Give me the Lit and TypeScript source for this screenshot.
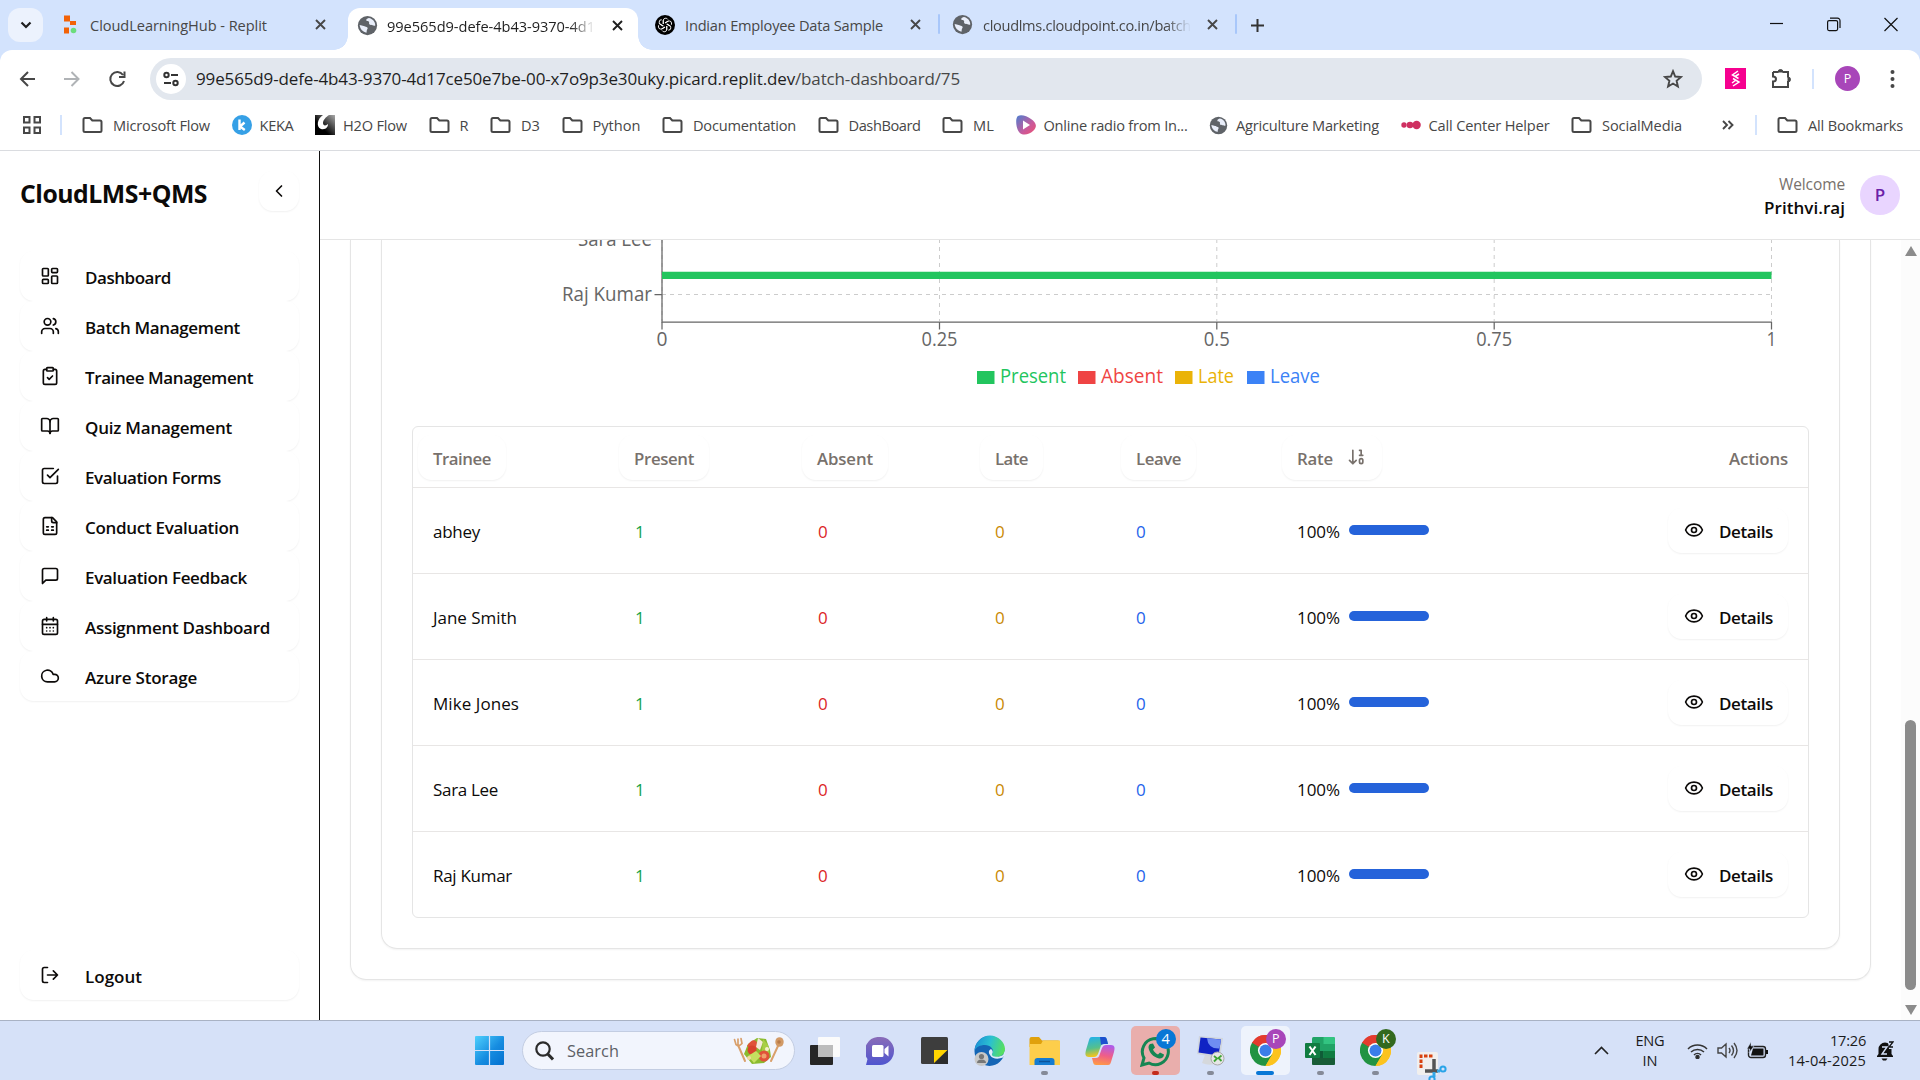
import { LitElement, html, css, svg } from "lit";
import { customElement, property } from "lit/decorators.js";

const lucide: Record<string, unknown> = {
  dashboard: svg`<rect width="7" height="9" x="3" y="3" rx="1"/><rect width="7" height="5" x="14" y="3" rx="1"/><rect width="7" height="9" x="14" y="12" rx="1"/><rect width="7" height="5" x="3" y="16" rx="1"/>`,
  users: svg`<path d="M16 21v-2a4 4 0 0 0-4-4H6a4 4 0 0 0-4 4v2"/><circle cx="9" cy="7" r="4"/><path d="M22 21v-2a4 4 0 0 0-3-3.87"/><path d="M16 3.13a4 4 0 0 1 0 7.75"/>`,
  clipboard: svg`<rect width="8" height="4" x="8" y="2" rx="1"/><path d="M16 4h2a2 2 0 0 1 2 2v14a2 2 0 0 1-2 2H6a2 2 0 0 1-2-2V6a2 2 0 0 1 2-2h2"/><path d="m9 14 2 2 4-4"/>`,
  book: svg`<path d="M12 7v14"/><path d="M3 18a1 1 0 0 1-1-1V4a1 1 0 0 1 1-1h5a4 4 0 0 1 4 4 4 4 0 0 1 4-4h5a1 1 0 0 1 1 1v13a1 1 0 0 1-1 1h-6a3 3 0 0 0-3 3 3 3 0 0 0-3-3z"/>`,
  check: svg`<path d="m9 11 3 3L22 4"/><path d="M21 12v7a2 2 0 0 1-2 2H5a2 2 0 0 1-2-2V5a2 2 0 0 1 2-2h11"/>`,
  file: svg`<path d="M15 2H6a2 2 0 0 0-2 2v16a2 2 0 0 0 2 2h12a2 2 0 0 0 2-2V7Z"/><path d="M14 2v4a2 2 0 0 0 2 2h4"/><path d="M8 13h2M14 13h2M8 17h2M14 17h2"/>`,
  message: svg`<path d="M21 15a2 2 0 0 1-2 2H7l-4 4V5a2 2 0 0 1 2-2h14a2 2 0 0 1 2 2z"/>`,
  calendar: svg`<path d="M8 2v4M16 2v4"/><rect width="18" height="18" x="3" y="4" rx="2"/><path d="M3 10h18M8 14h.01M12 14h.01M16 14h.01M8 18h.01M12 18h.01M16 18h.01"/>`,
  cloud: svg`<path d="M17.5 19H9a7 7 0 1 1 6.71-9h1.79a4.5 4.5 0 1 1 0 9Z"/>`,
  logout: svg`<path d="M9 21H5a2 2 0 0 1-2-2V5a2 2 0 0 1 2-2h4"/><path d="m16 17 5-5-5-5M21 12H9"/>`,
  left: svg`<path d="m15 18-6-6 6-6"/>`,
  eye: svg`<path d="M2.06 12.35a1 1 0 0 1 0-.7 10.75 10.75 0 0 1 19.88 0 1 1 0 0 1 0 .7 10.75 10.75 0 0 1-19.88 0"/><circle cx="12" cy="12" r="3"/>`,
  sort: svg`<path d="m3 16 4 4 4-4M7 20V4M17 10V4h-2M15 10h4"/><rect x="15" y="14" width="4" height="6" ry="2"/>`,
};
const line = (name: string, size = 20) =>
  html`<svg width=${size} height=${size} viewBox="0 0 24 24" fill="none" stroke="currentColor" stroke-width="2" stroke-linecap="round" stroke-linejoin="round">${lucide[name]}</svg>`;

/** A run of text tracked so that it fills the given advance width. */
@customElement("ui-text")
class UiText extends LitElement {
  static styles = css`
    :host { display: inline-block; white-space: pre; flex: none; }
  `;
  @property({ type: Number }) w = 0;
  @property() text = "";
  render() { return html`<span>${this.text}</span>`; }
  updated() {
    const el = this.renderRoot.querySelector("span")!;
    el.style.letterSpacing = "0";
    const natural = el.getBoundingClientRect().width;
    if (this.w && this.text.length) {
      el.style.letterSpacing = `${(this.w - natural) / this.text.length}px`;
      this.style.width = `${this.w}px`;
    }
  }
}
const t = (text: string, w: number, cls = "") => html`<ui-text class=${cls} .text=${text} .w=${w}></ui-text>`;

const globe = (s = 22) => html`<svg width=${s} height=${s} viewBox="0 0 24 24"><circle cx="12" cy="12" r="11" fill="#5f6368"/><path d="M3 11.5c2 .2 3.200 1 4.600 1.100 1.400 0 2 .900 3.400 1.200 1.400.4 1.500 1.800.6 2.800-.6.8-.4 2.200-.8 3.600-3.800-.6-7.200-3.800-7.800-8.700zM13.500 3.300c-2 .8-3.400 1.600-2.800 3 .5 1.200 2.200.4 3 1.500.6 1-.4 1.800.4 2.800 1 1.200 2.600.4 3.800 1.200 1 .7 2 .7 3 .2 0-4.500-3-7.900-7.400-8.700z" fill="#e9eefa"/></svg>`;
const folder = html`<svg width="21" height="18" viewBox="0 0 21 18" fill="none" stroke="#474747" stroke-width="2"><path d="M3 2h5l2.300 2.500H18a1.500 1.500 0 0 1 1.500 1.500v8.500A1.500 1.500 0 0 1 18 16H3a1.500 1.500 0 0 1-1.500-1.500v-11A1.500 1.500 0 0 1 3 2z"/></svg>`;
const cross = (c = "#474747") => html`<svg class="cross" width="11" height="11" viewBox="0 0 11 11" stroke=${c} stroke-width="1.900"><path d="M1 1l9 9M10 1l-9 9"/></svg>`;

const keka = html`<svg width="20" height="20" viewBox="0 0 20 20"><circle cx="10" cy="10" r="10" fill="#36a0e6"/><path d="M7.500 4.500v10.500M12.500 7.500l-4.500 4 4.800 3.500" fill="none" stroke="#fff" stroke-width="2.400"/></svg>`;
const h2o = html`<svg width="20" height="20" viewBox="0 0 20 20"><defs><linearGradient id="h" x1="0" x2="1" y1="1" y2="0"><stop offset=".35" stop-color="#000"/><stop offset="1" stop-color="#aaa"/></linearGradient></defs><rect width="20" height="20" fill="url(#h)"/><path d="M8 0C2 4 1 12 6 14c5 1 7-2 7-5-2 2-5 2-5-1S11 2 14 0z" fill="#fff"/></svg>`;
const radio = html`<svg width="20" height="20" viewBox="0 0 20 20"><defs><linearGradient id="r" x1="0" x2="1" y1="0" y2="1"><stop offset="0" stop-color="#4b7fd0"/><stop offset=".6" stop-color="#c85a9c"/><stop offset="1" stop-color="#f0506e"/></linearGradient></defs><path d="M2 1c3-2 9 0 13 3 5 3 7 8 2 12-4 4-11 5-14 1C0 13-1 3 2 1z" fill="url(#r)"/><path d="M7 5.500v9l7-4.500z" fill="#fff"/></svg>`;
const dots = html`<svg width="20" height="20" viewBox="0 0 20 20" fill="#cf3061"><circle cx="3" cy="10" r="2.700"/><circle cx="9" cy="10" r="3.300"/><circle cx="15.600" cy="10" r="4.200"/></svg>`;

const bookmarks: [unknown, string, number, boolean][] = [
  [folder, "Microsoft Flow", 97, true], [keka, "KEKA", 34, false], [h2o, "H2O Flow", 64, false],
  [folder, "R", 9, true], [folder, "D3", 19, true], [folder, "Python", 48, true],
  [folder, "Documentation", 103, true], [folder, "DashBoard", 72, true], [folder, "ML", 21, true],
  [radio, "Online radio from In...", 144, false], [globe(19), "Agriculture Marketing", 143, false],
  [dots, "Call Center Helper", 121, false], [folder, "SocialMedia", 80, true],
];

const nav: [string, string, number][] = [
  ["dashboard", "Dashboard", 86], ["users", "Batch Management", 155], ["clipboard", "Trainee Management", 168],
  ["book", "Quiz Management", 147], ["check", "Evaluation Forms", 136], ["file", "Conduct Evaluation", 154],
  ["message", "Evaluation Feedback", 162], ["calendar", "Assignment Dashboard", 185], ["cloud", "Azure Storage", 112],
];

const rows: [string, number][] = [["abhey", 47], ["Jane Smith", 84], ["Mike Jones", 86], ["Sara Lee", 65], ["Raj Kumar", 79]];

const chrome = html`<svg width="31" height="31" viewBox="0 0 32 32"><path d="M16 16L2.140 8A16 16 0 0 1 29.860 8z" fill="#e33b2e"/><path d="M16 16L29.860 8A16 16 0 0 1 16 32z" fill="#fcc31e"/><path d="M16 16v16A16 16 0 0 1 2.140 8z" fill="#229342"/><path d="M16 8h13.860L23 20z" fill="#fcc31e"/><path d="M9 20L2.140 8 16 8z" fill="#229342"/><path d="M2.140 8A16 16 0 0 1 29.860 8H16l-7 4z" fill="#e33b2e"/><path d="M16 32l7-12-7 2-7-2-4-6z" fill="#229342"/><path d="M23 20l-7 12A16 16 0 0 0 29.860 8H20z" fill="#fcc31e"/><circle cx="16" cy="16" r="7.800" fill="#fff"/><circle cx="16" cy="16" r="6.200" fill="#3b7de9"/></svg>`;

@customElement("app-root")
class AppRoot extends LitElement {
  static styles = css`
    :host { display: block; width: 1920px; height: 1080px; overflow: hidden; background: #fff; color: #0c0a09; font-family: "Open Sans", "Noto Sans", "Liberation Sans", sans-serif; font-size: 17px; line-height: 24px; }
    * { box-sizing: border-box; }
    svg { display: block; flex: none; }
    .row { display: flex; align-items: center; }
    .screen { display: flex; flex-direction: column; height: 1080px; }

    .strip { display: flex; height: 50px; background: #d3e3fd; font-size: 14.600px; color: #474747; }
    .search-tabs { width: 35px; height: 34px; margin: 8px 0 0 8px; border-radius: 12px; background: #ecf2fd; display: grid; place-items: center; }
    .tab { display: flex; align-items: center; height: 33px; margin-top: 8px; }
    .tab ui-text { padding-top: 1px; }
    .tab .cross { margin-left: auto; }
    .t1 { width: 263px; margin-left: 20px; }
    .t1 .ic { width: 27px; }
    .active { width: 290px; height: 42px; margin: 8px 0 0 22px; padding: 0 15px 8px 9px; background: #fff; border-radius: 12px 12px 0 0; position: relative; color: #1f1f1f; }
    .active::before, .active::after { content: ""; position: absolute; bottom: 0; width: 14px; height: 14px; }
    .active::before { left: -14px; background: radial-gradient(circle at 0 0, transparent 13.500px, #fff 14px); }
    .active::after { right: -14px; background: radial-gradient(circle at 100% 0, transparent 13.500px, #fff 14px); }
    .ic { width: 30px; flex: none; }
    .fade { width: 208px; overflow: hidden; white-space: nowrap; -webkit-mask-image: linear-gradient(90deg, #000 88%, transparent 100%); mask-image: linear-gradient(90deg, #000 88%, transparent 100%); }
    .t3 { width: 266px; margin-left: 17px; }
    .t4 { width: 266px; margin-left: 12px; }
    .t4 .ic { width: 31px; }
    .sep { width: 2px; height: 20px; background: #a8c7fa; margin-top: 14px; flex: none; border-radius: 1px; }
    .t3 + .sep { margin-left: 17px; }
    .t4 + .sep { margin-left: 17px; }
    .plus { margin: 19px 0 0 14px; }
    .win { margin: 17px 22px 0 auto; display: flex; gap: 43px; }

    .corner { background: #d3e3fd; }
    .toolbar { display: flex; align-items: center; height: 57px; background: #fff; border-radius: 12px 12px 0 0; padding: 0 20px 0 18px; }
    .tools { display: flex; gap: 26px; width: 132px; }
    .omni { display: flex; align-items: center; width: 1552px; height: 42px; border-radius: 21px; background: #e2e7ee; padding: 0 19px 0 6px; color: #1f1f1f; }
    .omni > ui-text { padding-top: 1px; }
    .site { width: 30px; height: 30px; border-radius: 50%; background: #fff; display: grid; place-items: center; margin-right: 10px; }
    .path { color: #474747; }
    .star { margin-left: auto; }
    .pink { margin-left: 23px; }
    .puzzle { margin-left: 25px; }
    .vsep { width: 2px; height: 20px; background: #d3e3fd; flex: none; }
    .toolbar .vsep { margin-left: 20px; }
    .who { width: 25px; height: 25px; border-radius: 50%; background: #a846b9; color: #fff; font-size: 12.500px; display: grid; place-items: center; margin-left: 21px; }
    .more { margin-left: 30px; }

    .marks { display: flex; align-items: center; height: 44px; border-bottom: 1px solid #dadce0; font-size: 14.600px; color: #474747; padding: 0 17px 7px 23px; }
    .marks .vsep { margin: 0 20px 0 19px; }
    .list { display: flex; gap: 21.500px; align-items: center; }
    .mark { display: flex; align-items: center; gap: 8px; }
    .mark.f { gap: 10px; }
    .chev { margin-left: auto; margin-right: 2px; }
    .all { width: 126px; }

    .page { display: flex; height: 869px; }
    .side { width: 320px; border-right: 1px solid #111; padding: 20px 20px 20px; display: flex; flex-direction: column; }
    .brand { display: flex; justify-content: space-between; height: 80px; }
    .brand ui-text { font-weight: 700; font-size: 24.800px; line-height: 44px; }
    .btn { border-radius: 14px; background: #fff; box-shadow: 0 1px 2px rgba(0, 0, 0, .06); display: flex; align-items: center; font-weight: 600; }
    .back { width: 40px; height: 40px; justify-content: center; }
    .nav .btn, .side > .btn { height: 50px; padding-left: 20px; gap: 25px; font-size: 17px; }
    .nav ui-text, .out ui-text { padding-top: 3px; }
    .out { margin-top: auto; }
    .main { flex: 1; display: flex; flex-direction: column; }
    .head { height: 89px; border-bottom: 1px solid #e5e5e5; display: flex; justify-content: flex-end; align-items: center; gap: 15px; padding: 0 20px 0 0; }
    .hello { display: flex; flex-direction: column; align-items: flex-end; padding-top: 2px; }
    .hello .w { color: #78716c; font-size: 15.500px; }
    .hello .n { font-weight: 600; }
    .avatar { width: 40px; height: 40px; border-radius: 50%; background: #e9d5ff; color: #6b21a8; font-weight: 600; display: grid; place-items: center; }
    .scroll { display: flex; height: 780px; }
    .view { width: 1581px; padding-left: 30px; }
    .outer { width: 1521px; height: 740px; border: 1px solid #e5e5e5; border-top: 0; border-radius: 0 0 16px 16px; box-shadow: 0 1px 2px rgba(0, 0, 0, .05); padding: 0 30px 30px; }
    .inner { width: 1459px; height: 709px; border: 1px solid #e5e5e5; border-top: 0; border-radius: 0 0 16px 16px; box-shadow: 0 1px 2px rgba(0, 0, 0, .05); padding: 0 30px; }
    .chart { height: 186px; }
    .chart text { font-size: 19.200px; fill: #666; }
    .table { width: 1397px; height: 492px; border: 1px solid #e5e5e5; border-radius: 6px; }
    .tr { display: grid; grid-template-columns: 202px 183px 177px 141px 161px 1fr 200px; height: 86px; align-items: center; border-top: 1px solid #e8e6e5; }
    .tr > * { margin-left: 20px; }
    .tr > :last-child { justify-self: end; margin-right: 20px; }
    .tr ui-text { position: relative; top: 1px; }
    .th { height: 60px; border: 0; color: #78716c; font-weight: 600; font-size: 16.800px; }
    .th ui-text { top: 2px; }
    .th .btn { justify-self: start; margin-left: 5px; padding: 0 15px; height: 45px; gap: 14px; color: #78716c; }
    .th .btn:nth-child(2), .th .btn:nth-child(3) { margin-left: 4px; }
    .g { color: #16a34a; } .r { color: #dc2626; } .y { color: #ca8a04; } .b { color: #2563eb; }
    .rate { gap: 9px; }
    .bar { width: 80px; height: 10px; border-radius: 5px; background: #2563da; margin-top: -2px; }
    .det { width: 120px; height: 45px; padding-left: 16px; gap: 15px; }
    .det svg { margin-top: -2px; }
    .sb { width: 19px; background: #fcfcfc; display: flex; flex-direction: column; align-items: center; padding: 6px 0 5px; }
    .thumb { width: 11px; height: 270px; border-radius: 6px; background: #8b8b8b; margin: 464px 0 auto; }

    .bar-os { display: flex; height: 60px; border-top: 1px solid #a9b2c4; background: #d6e1f8; align-items: center; color: #1b1b1b; }
    .start { margin-left: 475px; }
    .find { width: 273px; height: 39px; margin: 0 2px 0 18px; border-radius: 20px; background: #f2f5fd; border: 1px solid #c3cde2; display: flex; align-items: center; padding: 0 10px 0 12px; color: #5c5f66; font-size: 16.300px; }
    .find ui-text { margin-left: 13px; }
    .find svg:last-child { margin-left: auto; }
    .app { width: 55.100px; height: 59px; display: grid; place-items: center; position: relative; }
    .app.on::before { content: ""; position: absolute; left: 3px; top: 5px; width: 49px; height: 49px; border-radius: 5px; background: #eef3fc; }
    .app.alert::before { background: #e9aeac; }
    .app > svg { position: relative; }
    .pip { position: absolute; bottom: 5px; width: 7px; height: 4px; border-radius: 2px; background: #858a98; }
    .on .pip { width: 18px; background: #0877d6; }
    .alert .pip { width: 7px; background: #c42b1c; }
    .badge { position: absolute; left: 28px; top: 8px; width: 20px; height: 20px; border-radius: 50%; color: #fff; font-size: 12.500px; line-height: 20px; text-align: center; background: #0877d6; }
    .alert .badge { font-size: 14.500px; }
    .badge.p { background: #a846b9; } .badge.k { background: #33691e; }
    .tray { margin-left: auto; display: flex; align-items: center; padding-right: 26px; font-size: 14.600px; line-height: 20px; }
    .tray ui-text { position: relative; top: -1px; }
    .lang { width: 40px; margin-left: 21px; text-align: center; display: flex; flex-direction: column; align-items: center; }
    .status { display: flex; gap: 9px; margin-left: 17px; align-items: center; }
    .clock { display: flex; flex-direction: column; align-items: flex-end; margin: 0 10px 0 19px; }
  `;

  private tabs() {
    return html`<div class="strip">
      <div class="search-tabs"><svg width="12" height="8" viewBox="0 0 12 8" fill="none" stroke="#1f1f1f" stroke-width="2.200"><path d="M1.500 1.500L6 6l4.500-4.500"/></svg></div>
      <div class="tab t1"><div class="ic"><svg width="14" height="19" viewBox="0 0 14 19"><path d="M1 .5h6v6H1zM7 6h6v4H7z" fill="#f26207"/><path d="M1 12.500h5v6H1z" fill="#f26207"/><circle cx="10.500" cy="15.500" r="2.800" fill="#6bdd7c"/></svg></div>${t("CloudLearningHub - Replit", 177)}${cross()}</div>
      <div class="tab active"><div class="ic">${globe(21)}</div><div class="fade">${t("99e565d9-defe-4b43-9370-4d1", 208)}</div>${cross("#1f1f1f")}</div>
      <div class="tab t3"><div class="ic"><svg width="20" height="20" viewBox="0 0 20 20" fill="none"><circle cx="10" cy="10" r="10" fill="#000"/><g stroke="#fff" stroke-width=".9">${[0, 60, 120, 180, 240, 300].map((a) => svg`<path transform="rotate(${a} 10 10)" d="M8.200 9V5.600a2.500 2.500 0 0 1 4.700-1.100M10 8l3.500-2"/>`)}</g></svg></div>${t("Indian Employee Data Sample", 198)}${cross()}</div>
      <div class="sep"></div>
      <div class="tab t4"><div class="ic">${globe(21)}</div><div class="fade">${t("cloudlms.cloudpoint.co.in/batch", 208)}</div>${cross()}</div>
      <div class="sep"></div>
      <svg class="plus" width="13" height="13" viewBox="0 0 13 13" stroke="#333" stroke-width="2"><path d="M6.500 0v13M0 6.500h13"/></svg>
      <div class="win">
        <svg width="14" height="15" viewBox="0 0 14 15" stroke="#111" stroke-width="1.200"><path d="M0 6.500h13"/></svg>
        <svg width="14" height="15" viewBox="0 0 14 15" fill="none" stroke="#111" stroke-width="1.200"><rect x=".6" y="3.600" width="10" height="10" rx="1.500"/><path d="M3 1.200h7.500a2.500 2.500 0 0 1 2.500 2.500V11"/></svg>
        <svg width="14" height="15" viewBox="0 0 14 15" stroke="#111" stroke-width="1.200"><path d="M.5 1l13 13M13.500 1l-13 13"/></svg>
      </div>
    </div>`;
  }

  private toolbar() {
    return html`<div class="corner"><div class="toolbar">
      <div class="tools">
        <svg width="19" height="20" viewBox="0 0 19 20" fill="none" stroke="#474747" stroke-width="2"><path d="M17 10H3M10 3l-7 7 7 7"/></svg>
        <svg width="19" height="20" viewBox="0 0 19 20" fill="none" stroke="#b0b3b6" stroke-width="2"><path d="M1 10h14M8.500 3l7 7-7 7"/></svg>
        <svg width="19" height="20" viewBox="0 0 19 20" fill="none" stroke="#474747" stroke-width="2"><path d="M15 6a7 7 0 1 0 1 6M16.500 2.500v5.500H11"/></svg>
      </div>
      <div class="omni"><div class="site"><svg width="16" height="16" viewBox="0 0 16 16" fill="none" stroke="#333" stroke-width="2"><circle cx="3.500" cy="4" r="2.200"/><path d="M8 4h7M1 12h7"/><circle cx="12.500" cy="12" r="2.200"/></svg></div>${t("99e565d9-defe-4b43-9370-4d17ce50e7be-00-x7o9p3e30uky.picard.replit.dev", 599)}${t("/batch-dashboard/75", 165, "path")}
        <svg class="star" width="20" height="20" viewBox="0 0 20 20" fill="none" stroke="#474747" stroke-width="1.900"><path d="M10 2.200l2.200 5.300 5.800.5-4.400 3.800 1.300 5.700L10 14.500 5.100 17.500l1.300-5.700L2 8l5.800-.5z"/></svg></div>
      <svg class="pink" width="21" height="21" viewBox="0 0 21 21"><rect width="21" height="21" fill="#f6008f"/><path d="M13 3L7.500 7l6 3.500M14 6l-4 2.500M8 10.500l6 3.500-6 4M11 12l-4 3" fill="none" stroke="#fff" stroke-width="1.500"/></svg>
      <svg class="puzzle" width="21" height="21" viewBox="0 0 21 21" fill="none" stroke="#474747" stroke-width="2"><path d="M2 4h5.500M11.500 4H17v5.500M17 13v6H2v-5.500c4 0 4-5 0-5V4"/><path d="M7 4a2.300 2.300 0 0 1 5 0zM17 9a2.300 2.300 0 0 1 0 5z" fill="#474747" stroke-width="1"/></svg>
      <div class="vsep"></div><div class="who">P</div>
      <svg class="more" width="5" height="20" viewBox="0 0 5 20" fill="#474747"><circle cx="2.500" cy="3" r="2"/><circle cx="2.500" cy="10" r="2"/><circle cx="2.500" cy="17" r="2"/></svg>
    </div></div>
    <div class="marks">
      <svg width="18" height="18" viewBox="0 0 18 18" fill="none" stroke="#474747" stroke-width="2"><path d="M1 1h5.500v5.500H1zM11.500 1H17v5.500h-5.500zM1 11.500h5.500V17H1zM11.500 11.500H17V17h-5.500z"/></svg>
      <div class="vsep"></div>
      <div class="list">${bookmarks.map(([i, l, w, f]) => html`<div class="mark ${f ? "f" : ""}">${i}${t(l, w)}</div>`)}</div>
      <svg class="chev" width="12" height="10" viewBox="0 0 12 10" fill="none" stroke="#474747" stroke-width="1.900"><path d="M1 1l4 4-4 4M6.500 1l4 4-4 4"/></svg>
      <div class="vsep"></div><div class="mark f all">${folder}${t("All Bookmarks", 95)}</div>
    </div>`;
  }

  private chart() {
    const ticks: [number, string, number][] = [[250, "0", 11], [527.500, "0.25", 36], [804.800, "0.5", 26], [1082.200, "0.75", 36], [1359.500, "1", 10]];
    const legend: [number, string, string, number][] = [[565, "Present", "#22c55e", 66], [666, "Absent", "#ef4444", 62], [763, "Late", "#eab308", 36], [835, "Leave", "#3b82f6", 50]];
    return html`<svg class="chart" width="1397" height="186" viewBox="0 0 1397 186">
      <g stroke="#ccc" stroke-dasharray="4 4">${ticks.map(([x]) => svg`<path d="M${x} -1V81"/>`)}<path d="M250 54.500H1359"/></g>
      <g stroke="#666" stroke-width="1.250">${ticks.map(([x]) => svg`<path d="M${x} 82v7.500"/>`)}<path d="M250 0V82M249.500 82H1360M242.500 54.500h7.500"/></g>
      <path d="M250 31.800h1109.500v7.100H250z" fill="#22c55e"/>
      <text x="240" y="6" text-anchor="end" textLength="74" lengthAdjust="spacingAndGlyphs">Sara Lee</text>
      <text x="240" y="61" text-anchor="end" textLength="90" lengthAdjust="spacingAndGlyphs">Raj Kumar</text>
      ${ticks.map(([x, l, w]) => svg`<text x=${x} y="106" text-anchor="middle" textLength=${w} lengthAdjust="spacingAndGlyphs">${l}</text>`)}
      ${legend.map(([x, l, c, w]) => svg`<rect x=${x} y="131" width="17.500" height="13" fill=${c}/><text x=${x + 23} y="143" style="fill:${c}" textLength=${w} lengthAdjust="spacingAndGlyphs">${l}</text>`)}
    </svg>`;
  }

  private table() {
    const h: [string, number][] = [["Trainee", 58], ["Present", 60], ["Absent", 56], ["Late", 33], ["Leave", 45]];
    return html`<div class="table">
      <div class="tr th">${h.map(([l, w]) => html`<div class="btn">${t(l, w)}</div>`)}<div class="btn">${t("Rate", 36)}${line("sort")}</div>${t("Actions", 59)}</div>
      ${rows.map(([n, w]) => html`<div class="tr">${t(n, w)}${t("1", 9, "g")}${t("0", 10, "r")}${t("0", 10, "y")}${t("0", 10, "b")}
        <div class="row rate">${t("100%", 43)}<div class="bar"></div></div><div class="btn det">${line("eye")}${t("Details", 54)}</div></div>`)}
    </div>`;
  }

  private taskbar() {
    const app = (icon: unknown, cls = "", badge: unknown = "", pip = false) =>
      html`<div class="app ${cls}">${icon}${badge}${pip ? html`<div class="pip"></div>` : ""}</div>`;
    return html`<div class="bar-os">
      <svg class="start" width="29" height="29" viewBox="0 0 29 29"><defs><linearGradient id="w" x1="0" y1="0" x2="1" y2="1" ><stop offset="0" stop-color="#4fd0fd"/><stop offset=".55" stop-color="#168ce0"/><stop offset="1" stop-color="#0470cf"/></linearGradient></defs><rect width="29" height="29" rx="1" fill="url(#w)"/><path d="M14.500 0v29M0 14.500h29" stroke="#d6e1f8" stroke-width="1.200"/></svg>
      <div class="find"><svg width="19" height="20" viewBox="0 0 19 20" fill="none" stroke="#2b2b2b" stroke-width="2.200"><circle cx="8" cy="8" r="6.700"/><path d="M12.800 13L18 18.500" stroke-width="3"/></svg>${t("Search", 52)}
        <svg width="51" height="28" viewBox="0 0 51 28"><g stroke="#d9a06c" stroke-linecap="round" fill="none"><path d="M5 8l7 16" stroke-width="2"/><path d="M1.500 2.500l1.500 5q3 2.500 6-1L8 1.500M5 2v5" stroke-width="1.700"/><path d="M45 9l-7 15" stroke-width="2"/></g><ellipse cx="46.500" cy="5" rx="4.200" ry="4.800" fill="#d29a66"/><circle cx="46" cy="5" r="1.800" fill="#b97b49"/><path d="M11 17l4-10 9-6 9 1 4 11 1 7-7 6-12 1z" fill="#8bbb2f"/><path d="M14 9q5-8 9-5l3 6-6 4z" fill="#e05239"/><path d="M25 1l5 4-3 8-4-3z" fill="#f4ead8"/><path d="M30 2l5 6 1 8-7-2z" fill="#a8cf45"/><circle cx="19" cy="13" r="4.500" fill="#d8432c"/><circle cx="31" cy="19" r="5.500" fill="#e05239"/><circle cx="31" cy="19" r="2.500" fill="#f0a06c"/><path d="M15 19l8-5 5 5-7 7z" fill="#c5e060"/><circle cx="16" cy="21" r="2" fill="#f2d9a1"/><circle cx="34" cy="12" r="2" fill="#f6f0cb"/></svg></div>
      ${app(html`<svg width="30" height="28" viewBox="0 0 30 28"><rect y="8" width="23" height="20" rx="1" fill="#262626"/><rect x="8" width="22" height="20" rx="1" fill="#fbfbfb"/><path d="M8 8h15v12H8z" fill="#bcbcbc"/></svg>`)}
      ${app(html`<svg width="28" height="28" viewBox="0 0 28 28"><defs><linearGradient id="m" x1="0" y1="0" x2="0" y2="1"><stop offset="0" stop-color="#8a6cb8"/><stop offset="1" stop-color="#4f55cf"/></linearGradient></defs><path d="M14 0h.5A13.500 13.500 0 0 1 28 14a14 14 0 0 1-14 14H0l1.500-6A14 14 0 0 1 14 0z" fill="url(#m)"/><rect x="6" y="8" width="11.500" height="12" rx="1.500" fill="#fff"/><path d="M18.500 12l4-3.500v11l-4-3.500z" fill="#fff"/></svg>`)}
      ${app(html`<svg width="27" height="27" viewBox="0 0 27 27"><rect width="27" height="27" rx="1.500" fill="#3d3d3d"/><path d="M13 26V13h13.500z" fill="#ffd400"/><path d="M13 27L27 13v14z" fill="#2c2c2c"/></svg>`)}
      ${app(html`<svg width="31" height="32" viewBox="0 0 31 32"><defs><linearGradient id="e" x1="0" y1=".3" x2="1" y2=".5"><stop offset="0" stop-color="#1a8fd6"/><stop offset=".5" stop-color="#2bc0d0"/><stop offset="1" stop-color="#58e05c"/></linearGradient></defs><circle cx="15.500" cy="16" r="15" fill="#1565b5"/><path d="M.5 16C1 7 8 .5 16 .5S31 7 31 14c0 6-5 8-9 8-3 0-5-1-4-3 3-5-2-9-7-9C6 10 2 12 .5 16z" fill="url(#e)"/><path d="M17 14c-2 1-3 3-1 6 2 4 8 4.500 13 2.500l2-3V16l-2 4c-4 3-12 2-11-1 1.500-2 .5-4-1-5z" fill="#dcebfa"/><circle cx="7.500" cy="24" r="7" fill="#c8c8c8"/><circle cx="7.500" cy="21.500" r="2.600" fill="#777"/><path d="M3 28q0-3.500 4.500-3.500T12 28z" fill="#777"/></svg>`)}
      ${app(html`<svg width="31" height="28" viewBox="0 0 31 28"><path d="M.5 2Q.5 0 2.500 0H10l3 3.500h16q2 0 2 2V10H.5z" fill="#e0a10c"/><path d="M.5 7H12l2-3.500h17V28H.5z" fill="#fdce4b"/><path d="M5.500 28v-4q0-3 3-3h14q3 0 3 3v4z" fill="#147bd1"/><path d="M10 24.500h11" stroke="#0b539b" stroke-width="1.500"/></svg>`, "", "", true)}
      ${app(html`<svg width="30" height="30" viewBox="0 0 30 30"><defs><linearGradient id="c1" x1="0" y1="0" x2=".2" y2="1"><stop offset="0" stop-color="#1fb0ef"/><stop offset=".6" stop-color="#55c08d"/><stop offset="1" stop-color="#f4c51c"/></linearGradient><linearGradient id="c2" x1=".5" y1="0" x2=".3" y2="1"><stop offset="0" stop-color="#b05ce8"/><stop offset=".5" stop-color="#ef5e88"/><stop offset="1" stop-color="#ff9b45"/></linearGradient></defs><path d="M7 1h12c2 0 2.500 1 3 3l1 4h-4c-2 0-3 1-3.500 3L13 18c-1 2-2 3-4 3H4c-4 0-4-3-3-7L4 4c.7-2 1-3 3-3z" fill="url(#c1)"/><path d="M15 1h4c2 0 2.500 1 3 3l1 4h-4c-2 0-3 1-3 1z" fill="#1c50cf"/><path d="M23 29H11c-2 0-2.500-1-3-3l-1-4h4c2 0 3-1 3.500-3l2.500-7c1-2 2-3 4-3h5c4 0 4 3 3 7l-3 10c-.7 2-1 3-3 3z" fill="url(#c2)"/></svg>`)}
      ${app(html`<svg width="30" height="32" viewBox="0 0 30 32"><path d="M2 30l2-7A13 13 0 1 1 9 28z" fill="none" stroke="#168653" stroke-width="3"/><path d="M10 9l3-.5 2 4-2 2c1 2.500 3 4 5 5l2-2 4 2c0 3-3 4.500-5 4-6-1.500-10-6-10.500-11 0-1.500.5-2.500 1.500-3.500z" fill="#168653"/></svg>`, "on alert", html`<div class="badge">4</div>`, true)}
      ${app(html`<svg width="29" height="31" viewBox="0 0 29 31"><path d="M9 20h11l3 7q-8 5-17 1z" fill="#d5d8dc"/><path d="M3 1l24 2-3 20L1 19z" fill="#d0d5dc"/><path d="M4.500 2.500l20.500 2-2.500 16L2.500 17.500z" fill="#1023c4"/><path d="M11 3.200l14 1.300-1.500 9Q12 14 11 3.200z" fill="#6f8df2"/><circle cx="21.500" cy="23.500" r="6.500" fill="#e6e6e6" stroke="#aaa"/><path d="M18 21l3 2.500-3 3M25.500 20.500l-3 2.500 3 3" stroke="#3fa535" stroke-width="1.800" fill="none"/></svg>`, "", "", true)}
      ${app(chrome, "on", html`<div class="badge p">P</div>`, true)}
      ${app(html`<svg width="30" height="30" viewBox="0 0 30 30"><rect x="7" y="1" width="23" height="28" rx="1.500" fill="#21a366"/><path d="M18.500 1H28.500a1.500 1.500 0 0 1 1.500 1.500V8H18.500z" fill="#33c481"/><path d="M7 15h11.500v7H7z" fill="#0f5c37"/><path d="M18.500 15H30v7H18.500z" fill="#107c41"/><path d="M7 22h23v5.500a1.500 1.500 0 0 1-1.500 1.500h-20A1.500 1.500 0 0 1 7 27.500z" fill="#185c37"/><rect y="7" width="15" height="15" rx="1" fill="#107c41"/><path d="M4.500 10.500l6 8.500M10.500 10.500l-6 8.500" stroke="#fff" stroke-width="2.100"/></svg>`, "", "", true)}
      ${app(chrome, "", html`<div class="badge k">K</div>`, true)}
      ${app(html`<svg width="30" height="28" viewBox="0 0 30 28" overflow="visible"><g transform="translate(1 15)"><rect width="21" height="23" rx="2" fill="#f1efee"/><path d="M4 16V4h12" stroke="#d8410e" stroke-width="3" stroke-dasharray="3.500 1.500" fill="none"/><path d="M17 7v13M8 19h13" stroke="#555" stroke-width="3.500"/><path d="M20 19h3M17 20v5" stroke="#35a7e6" stroke-width="3"/><circle cx="26" cy="17" r="2.600" stroke="#2aa4e8" stroke-width="2" fill="none"/><circle cx="15" cy="27" r="2.600" stroke="#2aa4e8" stroke-width="2" fill="none"/></g></svg>`)}
      <div class="tray">
        <svg width="15" height="9" viewBox="0 0 15 9" fill="none" stroke="#222" stroke-width="1.600"><path d="M1 8l6.500-6.500L14 8"/></svg>
        <div class="lang">${t("ENG", 29)}${t("IN", 15)}</div>
        <div class="status">
          <svg width="21" height="16" viewBox="0 0 21 16" fill="none" stroke="#333" stroke-width="1.500"><path d="M1 6a13.500 13.500 0 0 1 19 0M4 9a9.500 9.500 0 0 1 13 0M7 12a5 5 0 0 1 7 0"/><circle cx="10.500" cy="14" r="1.500" fill="#222"/></svg>
          <svg width="21" height="17" viewBox="0 0 21 17" fill="none" stroke="#444" stroke-width="1.400"><path d="M1 6h3.500L9 2v13l-4.500-4H1zM12 6q2 2.500 0 5M14.500 3.500q4 5 0 10M17 1q6 7.500 0 15"/></svg>
          <svg width="22" height="17" viewBox="0 0 22 17"><rect x="1.500" y="4.500" width="17" height="11" rx="2.500" fill="none" stroke="#222" stroke-width="1.400"/><path d="M6 6.500h10.500v7H4z" fill="#111"/><path d="M19 8h2v4h-2z" fill="#111"/><path d="M4 0L0 7h3l-1 4 5-7H4z" fill="#111" stroke="#d6e1f8" stroke-width=".5"/></svg>
        </div>
        <div class="clock">${t("17:26", 36)}${t("14-04-2025", 78)}</div>
        <svg width="18" height="20" viewBox="0 0 18 20"><path d="M1 15l1.500-2V8a6.500 6.500 0 0 1 13 0v5l1.500 2v1H1z" fill="#111"/><path d="M5.500 17.500h6l-1.500 2H7z" fill="#111"/><path d="M6 6h5l-5 7h5" fill="none" stroke="#d6e1f8" stroke-width="1.400"/><path d="M12 0h6v8h-5z" fill="#d6e1f8"/><path d="M13 1h4l-4 5h4" fill="none" stroke="#111" stroke-width="1.300"/></svg>
      </div>
    </div>`;
  }

  render() {
    return html`<div class="screen">${this.tabs()}${this.toolbar()}
      <div class="page">
        <div class="side">
          <div class="brand">${t("CloudLMS+QMS", 187)}<div class="btn back">${line("left")}</div></div>
          <div class="nav">${nav.map(([i, l, w]) => html`<div class="btn">${line(i)}${t(l, w)}</div>`)}</div>
          <div class="btn out">${line("logout")}${t("Logout", 57)}</div>
        </div>
        <div class="main">
          <div class="head"><div class="hello">${t("Welcome", 66, "w")}${t("Prithvi.raj", 81, "n")}</div><div class="avatar">P</div></div>
          <div class="scroll">
            <div class="view"><div class="outer"><div class="inner">${this.chart()}${this.table()}</div></div></div>
            <div class="sb"><svg width="14" height="10" viewBox="0 0 14 10"><path d="M7 0l6 10H1z" fill="#8b8b8b"/></svg><div class="thumb"></div><svg width="14" height="10" viewBox="0 0 14 10"><path d="M7 10l6-10H1z" fill="#8b8b8b"/></svg></div>
          </div>
        </div>
      </div>
      ${this.taskbar()}</div>`;
  }
}
